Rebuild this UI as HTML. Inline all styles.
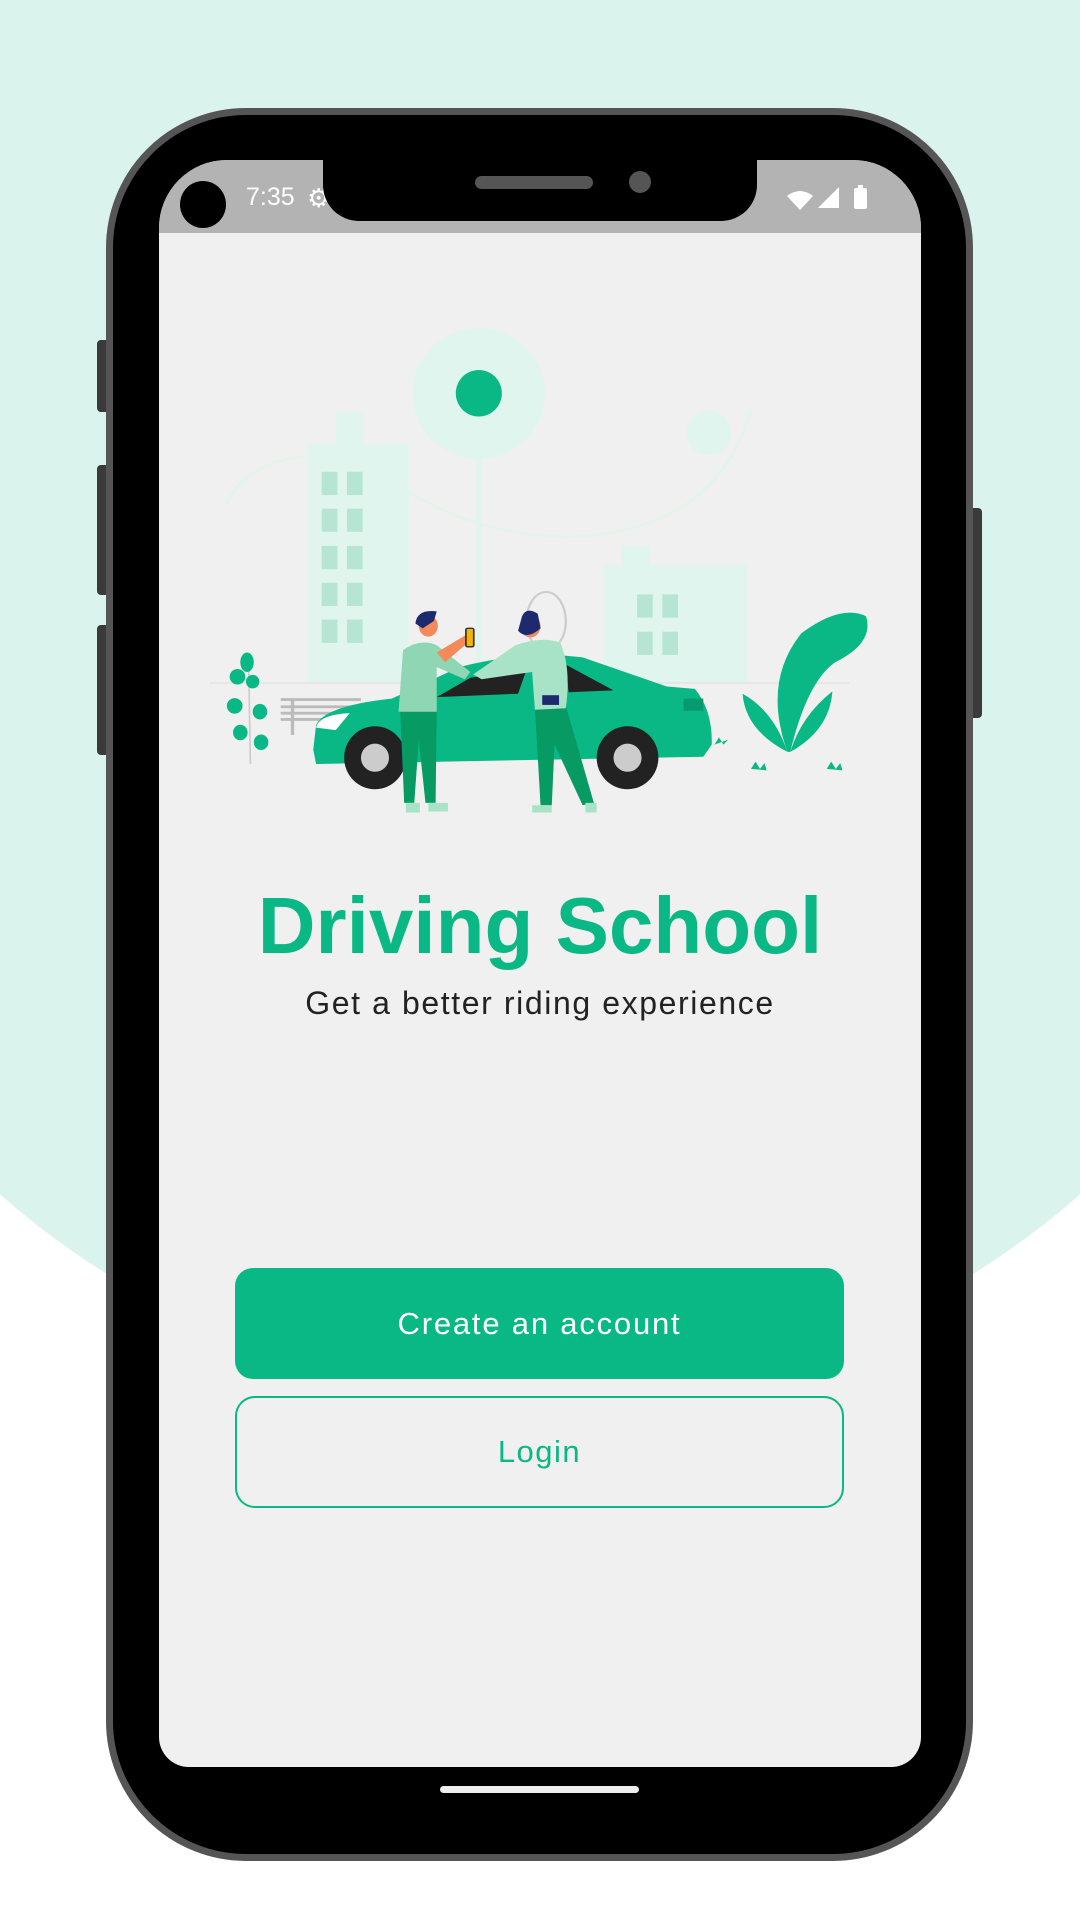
<!DOCTYPE html>
<html><head><meta charset="utf-8"><style>
*{margin:0;padding:0;box-sizing:border-box}
body{width:1080px;height:1920px;background:#fff;position:relative;overflow:hidden;font-family:"Liberation Sans",sans-serif}
.bgc{position:absolute;left:-278px;top:-238px;width:1636px;height:1636px;border-radius:50%;background:#daf3ec}
.btn-side{position:absolute;background:#3a3a3a;border-radius:4px}
.phone{position:absolute;left:106px;top:108px;width:867px;height:1753px;background:#000;border:7px solid #555;border-radius:140px}
.screen{position:absolute;left:159px;top:160px;width:762px;height:1607px;background:#f0f0f0;border-radius:68px 68px 30px 30px;overflow:hidden}
.status{position:absolute;left:0;top:0;width:762px;height:73px;background:#b3b3b3}
.notch{position:absolute;left:323px;top:150px;width:434px;height:71px;background:#000;border-radius:0 0 36px 36px}
.t1{position:absolute;left:0;width:1080px;text-align:center}
</style></head><body>
<div class="bgc"></div>
<div class="btn-side" style="left:97px;top:340px;width:14px;height:72px"></div>
<div class="btn-side" style="left:97px;top:465px;width:14px;height:130px"></div>
<div class="btn-side" style="left:97px;top:625px;width:14px;height:130px"></div>
<div class="btn-side" style="left:968px;top:508px;width:14px;height:210px"></div>
<div class="phone"></div>
<div class="screen"><div class="status"></div></div>
<div style="position:absolute;left:307px;top:183px;color:#fff;font-size:26px">⚙</div>
<div class="notch"></div>
<div style="position:absolute;left:475px;top:176px;width:118px;height:13px;background:#555;border-radius:7px"></div>
<div style="position:absolute;left:629px;top:171px;width:22px;height:22px;background:#555;border-radius:50%"></div>
<div style="position:absolute;left:180px;top:181px;width:46px;height:47px;background:#000;border-radius:50%"></div>
<div style="position:absolute;left:246px;top:183px;color:#fff;font-size:25px">7:35</div>
<svg style="position:absolute;left:0;top:0" width="1080" height="1920">
<path d="M787,196 Q800,186 813,196 L800,210 Z" fill="#fff"/>
<path d="M818,208 L839,187 L839,208 Z" fill="#fff"/>
<rect x="854" y="188" width="13" height="21" rx="2" fill="#fff"/>
<rect x="858" y="185" width="5" height="4" fill="#fff"/>
<g transform="translate(100,100) scale(0.5612,0.4847)">
<path d="M225,835 Q260,745 370,735" stroke="#e3f4ec" stroke-width="5" fill="none"/>
<path d="M550,810 Q700,910 860,900 Q1100,880 1160,640" stroke="#e3f4ec" stroke-width="5" fill="none"/>
<ellipse cx="675" cy="605" rx="118" ry="135" fill="#e0f5ee"/>
<ellipse cx="675" cy="605" rx="41" ry="48" fill="#0ab885"/>
<ellipse cx="1085" cy="687" rx="40" ry="46" fill="#e0f5ee"/>
<rect x="670" y="740" width="10" height="470" fill="#e0f5ee"/>
<rect x="370" y="710" width="180" height="495" fill="#e0f5ee"/>
<rect x="420" y="645" width="50" height="70" fill="#e0f5ee"/>
<g fill="#b6e6d3">
<rect x="395" y="767" width="28" height="48"/><rect x="440" y="767" width="28" height="48"/>
<rect x="395" y="843" width="28" height="48"/><rect x="440" y="843" width="28" height="48"/>
<rect x="395" y="920" width="28" height="48"/><rect x="440" y="920" width="28" height="48"/>
<rect x="395" y="996" width="28" height="48"/><rect x="440" y="996" width="28" height="48"/>
<rect x="395" y="1072" width="28" height="48"/><rect x="440" y="1072" width="28" height="48"/>
</g>
<rect x="897" y="958" width="256" height="247" fill="#e0f5ee"/>
<rect x="930" y="920" width="50" height="40" fill="#e0f5ee"/>
<rect x="957" y="1020" width="28" height="48" fill="#b6e6d3"/><rect x="1002" y="1020" width="28" height="48" fill="#b6e6d3"/>
<rect x="957" y="1097" width="28" height="48" fill="#b6e6d3"/><rect x="1002" y="1097" width="28" height="48" fill="#b6e6d3"/>
<line x1="195" y1="1203" x2="1335" y2="1203" stroke="#e6e6e6" stroke-width="4"/>
<ellipse cx="795" cy="1075" rx="35" ry="60" fill="none" stroke="#ccc" stroke-width="4"/>
<g stroke="#bbb" stroke-width="6"><line x1="322" y1="1237" x2="465" y2="1237"/><line x1="322" y1="1252" x2="465" y2="1252"/><line x1="322" y1="1265" x2="465" y2="1265"/><line x1="322" y1="1278" x2="420" y2="1278"/><line x1="343" y1="1237" x2="343" y2="1310"/></g>
<path d="M380,1340 L385,1290 Q400,1250 520,1235 L640,1170 Q760,1135 860,1150 L1010,1210 L1060,1215 Q1092,1260 1090,1330 L1075,1355 L385,1370 Z" fill="#0ab885"/>
<path d="M600,1232 L660,1192 L760,1175 L745,1225 Z" fill="#222"/>
<path d="M830,1165 L915,1218 L835,1222 Z" fill="#222"/>
<path d="M385,1295 Q390,1268 445,1265 L420,1300 Z" fill="#fff"/>
<rect x="1040" y="1235" width="35" height="25" fill="#079a6e"/>
<ellipse cx="490" cy="1357" rx="55" ry="65" fill="#222"/><ellipse cx="490" cy="1357" rx="25" ry="29" fill="#ccc"/>
<ellipse cx="940" cy="1357" rx="55" ry="65" fill="#222"/><ellipse cx="940" cy="1357" rx="25" ry="29" fill="#ccc"/>
<path d="M535,1260 L600,1260 L598,1450 L580,1450 L568,1320 L560,1450 L542,1450 Z" fill="#079a63"/>
<path d="M540,1135 Q570,1110 600,1125 L660,1180 L650,1195 L600,1170 L600,1262 L532,1262 Z" fill="#8fd6b5"/>
<path d="M600,1140 L650,1105 L660,1115 L615,1160 Z" fill="#f28a5a"/>
<rect x="652" y="1090" width="14" height="38" rx="3" fill="#f5b400" stroke="#333" stroke-width="3"/>
<ellipse cx="585" cy="1085" rx="17" ry="22" fill="#f28a5a"/>
<path d="M562,1080 Q565,1050 600,1055 L595,1075 L575,1090 Z" fill="#1e2a6e"/>
<path d="M545,1450 h25 v20 h-25 z M585,1450 h35 v18 h-35 z" fill="#a8e3c8"/>
<path d="M775,1255 L830,1250 L880,1450 L860,1455 L810,1330 L805,1455 L785,1455 Z" fill="#079a63"/>
<path d="M665,1185 L740,1125 Q790,1105 820,1120 Q840,1170 830,1255 L775,1258 L770,1180 L680,1195 Z" fill="#a8e3c8"/>
<ellipse cx="767" cy="1085" rx="18" ry="24" fill="#f28a5a"/>
<path d="M745,1095 Q760,1115 785,1090 L780,1060 Q760,1045 752,1065 Z" fill="#1e2a6e"/>
<rect x="788" y="1228" width="30" height="20" fill="#1e2a6e"/>
<path d="M770,1455 h35 v15 h-35 z M865,1450 h20 v20 h-20 z" fill="#a8e3c8"/>
<path d="M1225,1345 Q1180,1200 1250,1100 Q1320,1040 1365,1065 Q1380,1120 1310,1160 Q1260,1200 1230,1345 Z" fill="#0ab885"/>
<path d="M1225,1345 Q1150,1300 1145,1225 Q1200,1260 1225,1345 Z" fill="#0ab885"/>
<path d="M1230,1345 Q1300,1300 1305,1220 Q1250,1270 1230,1345 Z" fill="#0ab885"/>
<path d="M1160,1380 l8,-15 l8,15 l8,-12 l4,15 z M1295,1380 l8,-15 l8,15 l8,-12 l4,15 z M1095,1330 l8,-15 l8,15 l8,-10 z" fill="#0ab885"/>
<line x1="265" y1="1170" x2="268" y2="1370" stroke="#ccc" stroke-width="3"/>
<g fill="#0ab885">
<ellipse cx="262" cy="1160" rx="12" ry="20"/><ellipse cx="245" cy="1190" rx="14" ry="16"/><ellipse cx="272" cy="1200" rx="12" ry="14"/>
<ellipse cx="240" cy="1250" rx="14" ry="16"/><ellipse cx="285" cy="1262" rx="13" ry="16"/>
<ellipse cx="250" cy="1305" rx="13" ry="16"/><ellipse cx="287" cy="1325" rx="13" ry="16"/>
</g>
</g>
</svg>
<div class="t1" style="top:880px;font-size:80px;color:#0ab885;font-weight:bold">Driving School</div>
<div class="t1" style="top:985px;font-size:32px;color:#222;letter-spacing:1.6px">Get a better riding experience</div>
<div style="position:absolute;left:235px;top:1268px;width:609px;height:111px;background:#0ab885;border-radius:18px;color:#fff;font-size:31px;text-align:center;line-height:111px;letter-spacing:1.8px">Create an account</div>
<div style="position:absolute;left:235px;top:1396px;width:609px;height:112px;border:2px solid #0ab885;border-radius:20px;color:#0ab885;font-size:31px;text-align:center;line-height:108px;letter-spacing:1.5px">Login</div>
<div style="position:absolute;left:440px;top:1786px;width:199px;height:7px;background:#eee;border-radius:4px"></div>
</body></html>
